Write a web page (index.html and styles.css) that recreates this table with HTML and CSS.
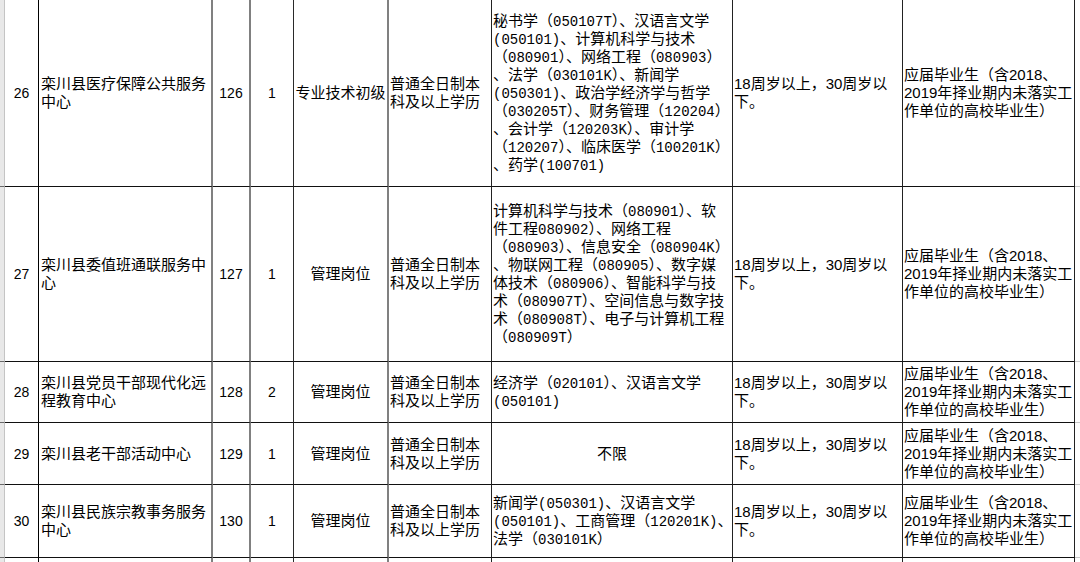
FILE: index.html
```html
<!DOCTYPE html>
<html lang="zh-CN">
<head>
<meta charset="utf-8">
<title>岗位表</title>
<link rel="stylesheet" href="styles.css">
</head>
<body>
<div class="sheet">
  <!-- row 26 -->
  <div class="cell band"></div>
  <div class="cell no">26</div>
  <div class="cell unit"><div>栾川县医疗保障公共服务中心</div></div>
  <div class="cell pcode">126</div>
  <div class="cell num">1</div>
  <div class="cell post">专业技术初级</div>
  <div class="cell edu"><div>普通全日制本科及以上学历</div></div>
  <div class="cell major"><div>秘书学（<span class="code">050107T</span>）、汉语言文学<br><span class="code">(050101)</span>、计算机科学与技术<br>（<span class="code">080901</span>）、网络工程（<span class="code">080903</span>）<br>、法学（<span class="code">030101K</span>）、新闻学<br><span class="code">(050301)</span>、政治学经济学与哲学<br>（<span class="code">030205T</span>）、财务管理（<span class="code">120204</span>）<br>、会计学（<span class="code">120203K</span>）、审计学<br>（<span class="code">120207</span>）、临床医学（<span class="code">100201K</span>）<br>、药学<span class="code">(100701)</span></div></div>
  <div class="cell age"><div>18周岁以上，30周岁以<br>下。</div></div>
  <div class="cell note"><div>应届毕业生（含2018、<br>2019年择业期内未落实工<br>作单位的高校毕业生）</div></div>
  <div class="cell edge"></div>

  <!-- row 27 -->
  <div class="cell band"></div>
  <div class="cell no">27</div>
  <div class="cell unit"><div>栾川县委值班通联服务中心</div></div>
  <div class="cell pcode">127</div>
  <div class="cell num">1</div>
  <div class="cell post">管理岗位</div>
  <div class="cell edu"><div>普通全日制本科及以上学历</div></div>
  <div class="cell major"><div>计算机科学与技术（<span class="code">080901</span>）、软<br>件工程<span class="code">080902</span>）、网络工程<br>（<span class="code">080903</span>）、信息安全（<span class="code">080904K</span>）<br>、物联网工程（<span class="code">080905</span>）、数字媒<br>体技术（<span class="code">080906</span>）、智能科学与技<br>术（<span class="code">080907T</span>）、空间信息与数字技<br>术（<span class="code">080908T</span>）、电子与计算机工程<br>（<span class="code">080909T</span>）</div></div>
  <div class="cell age"><div>18周岁以上，30周岁以<br>下。</div></div>
  <div class="cell note"><div>应届毕业生（含2018、<br>2019年择业期内未落实工<br>作单位的高校毕业生）</div></div>
  <div class="cell edge"></div>

  <!-- row 28 -->
  <div class="cell band"></div>
  <div class="cell no">28</div>
  <div class="cell unit"><div>栾川县党员干部现代化远程教育中心</div></div>
  <div class="cell pcode">128</div>
  <div class="cell num">2</div>
  <div class="cell post">管理岗位</div>
  <div class="cell edu"><div>普通全日制本科及以上学历</div></div>
  <div class="cell major"><div>经济学（<span class="code">020101</span>）、汉语言文学<br><span class="code">(050101)</span></div></div>
  <div class="cell age"><div>18周岁以上，30周岁以<br>下。</div></div>
  <div class="cell note"><div>应届毕业生（含2018、<br>2019年择业期内未落实工<br>作单位的高校毕业生）</div></div>
  <div class="cell edge"></div>

  <!-- row 29 -->
  <div class="cell band"></div>
  <div class="cell no">29</div>
  <div class="cell unit"><div>栾川县老干部活动中心</div></div>
  <div class="cell pcode">129</div>
  <div class="cell num">1</div>
  <div class="cell post">管理岗位</div>
  <div class="cell edu"><div>普通全日制本科及以上学历</div></div>
  <div class="cell major centered">不限</div>
  <div class="cell age"><div>18周岁以上，30周岁以<br>下。</div></div>
  <div class="cell note"><div>应届毕业生（含2018、<br>2019年择业期内未落实工<br>作单位的高校毕业生）</div></div>
  <div class="cell edge"></div>

  <!-- row 30 -->
  <div class="cell band"></div>
  <div class="cell no">30</div>
  <div class="cell unit"><div>栾川县民族宗教事务服务中心</div></div>
  <div class="cell pcode">130</div>
  <div class="cell num">1</div>
  <div class="cell post">管理岗位</div>
  <div class="cell edu"><div>普通全日制本科及以上学历</div></div>
  <div class="cell major"><div>新闻学<span class="code">(050301)</span>、汉语言文学<br><span class="code">(050101)</span>、工商管理（<span class="code">120201K)</span>、<br>法学（<span class="code">030101K</span>）</div></div>
  <div class="cell age"><div>18周岁以上，30周岁以<br>下。</div></div>
  <div class="cell note"><div>应届毕业生（含2018、<br>2019年择业期内未落实工<br>作单位的高校毕业生）</div></div>
  <div class="cell edge"></div>

  <!-- next row (cut off at the bottom of the view) -->
  <div class="cell band tail"></div>
  <div class="cell no tail"></div>
  <div class="cell unit tail"></div>
  <div class="cell pcode tail"></div>
  <div class="cell num tail"></div>
  <div class="cell post tail"></div>
  <div class="cell edu tail"></div>
  <div class="cell major tail"></div>
  <div class="cell age tail"></div>
  <div class="cell note tail"></div>
  <div class="cell edge tail"></div>
</div>
</body>
</html>
```

FILE: styles.css
```css
html, body {
  margin: 0;
  padding: 0;
  background: #ffffff;
}

body {
  width: 1080px;
  height: 562px;
  overflow: hidden;
  font-family: "Liberation Sans", "Noto Sans CJK SC", sans-serif;
  font-size: 15px;
  line-height: 18px;
  color: #000000;
}

.sheet {
  display: grid;
  grid-template-columns: 5px 34px 174px 38px 43px 95px 103px 241px 170px 172px 6px;
  grid-template-rows: 187px 175px 61px 62px 73px 4px;
}

.cell {
  box-sizing: border-box;
  display: flex;
  align-items: center;
  padding: 0 1px;
  border-bottom: 1px solid #111111;
  white-space: nowrap;
  overflow: hidden;
}

.tail {
  border-bottom: 0;
}

.band {
  background: #e8e8e8;
  border-right: 1px solid #c4c4c4;
  border-bottom-color: #6a6a6a;
  padding: 0;
}

.no {
  justify-content: center;
  border-right: 1px solid #000000;
  font-size: 14px;
}

.unit {
  border-right: 2px solid #808080;
  padding-left: 2px;
  white-space: normal;
}

.pcode {
  justify-content: center;
  border-right: 2px solid #808080;
  font-size: 14px;
}

.num {
  justify-content: center;
  border-right: 1px solid #2a2a2a;
  font-size: 14px;
}

.post {
  justify-content: center;
  border-right: 2px solid #808080;
  padding: 0;
}

.edu {
  border-right: 1px solid #222222;
  white-space: normal;
}

.major {
  border-right: 1px solid #222222;
}

.major.centered {
  justify-content: center;
}

.code {
  font-family: "Liberation Mono", monospace;
  font-size: 14px;
  line-height: 14px;
}

.age {
  border-right: 1px solid #222222;
}

.note {
  border-right: 1px solid #222222;
}

.edge {
  border-bottom-color: #c8c8c8;
  padding: 0;
}
```
